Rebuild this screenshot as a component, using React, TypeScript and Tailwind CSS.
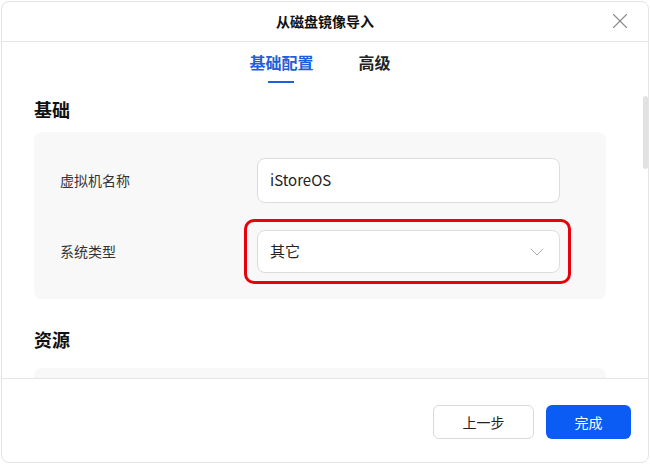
import { X, ChevronDown } from "lucide-react";

const font = { fontFamily: '"Noto Sans CJK SC", "Noto Sans", sans-serif' };

export default function App() {
  return (
    <div style={font} className="h-[464px] w-[650px] bg-white p-px">
      <div className="relative flex h-full w-full flex-col overflow-hidden rounded-[8px] border border-[#e4e4e4] bg-white">
        {/* header */}
        <div className="relative flex h-[40px] shrink-0 items-center justify-center border-b border-[#e6e6e6]">
          <span className="text-[14px] font-bold text-[#111]">从磁盘镜像导入</span>
          <button type="button" className="absolute right-[15px] top-[6px] text-[#8a8a8a]">
            <X size={26} strokeWidth={1} />
          </button>
        </div>

        {/* tabs */}
        <div className="flex h-[48px] shrink-0 justify-center gap-[45px] pr-[10px] pt-[9px]">
          <div className="flex flex-col items-center">
            <span className="text-[16px] font-bold leading-[22px] text-[#1f5fdc]">基础配置</span>
            <span className="mt-[8px] h-[2px] w-[26px] bg-[#1f5fdc]" />
          </div>
          <span className="text-[16px] font-semibold leading-[22px] text-[#222]">高级</span>
        </div>

        {/* body */}
        <div className="relative flex-1 overflow-hidden pl-[32px] pr-[42px] pt-[7px]">
          <h2 className="text-[18px] font-bold leading-[24px] text-[#111]">基础</h2>
          <div className="mt-[11px] flex flex-col gap-[27px] rounded-[8px] bg-[#f8f8f8] py-[26px] pl-[26px] pr-[46px]">
            <div className="flex items-center">
              <span className="w-[197px] text-[14px] text-[#333]">虚拟机名称</span>
              <div className="flex h-[45px] flex-1 items-center rounded-[8px] border border-[#dcdcdc] bg-white px-[12px] text-[15px] text-[#222]">
                iStoreOS
              </div>
            </div>
            <div className="flex items-center">
              <span className="w-[197px] text-[14px] text-[#333]">系统类型</span>
              <div className="relative flex h-[43px] flex-1 items-center justify-between rounded-[8px] border border-[#dcdcdc] bg-white pl-[12px] pr-[10px] text-[15px] text-[#222]">
                <span>其它</span>
                <ChevronDown size={24} strokeWidth={1} className="text-[#aaa]" />
                <div className="pointer-events-none absolute -bottom-[12px] -left-[14px] -right-[12px] -top-[12px] rounded-[10px] border-[3px] border-[#e8000b]" />
              </div>
            </div>
          </div>

          <h2 className="mt-[28px] text-[18px] font-bold leading-[24px] text-[#111]">资源</h2>
          <div className="mt-[17px] h-[80px] rounded-[8px] bg-[#f8f8f8]" />

          <div className="absolute right-0 top-[6px] h-[73px] w-[5px] rounded-full bg-[#e2e2e2]" />
        </div>

        {/* footer */}
        <div className="flex h-[84px] shrink-0 items-start justify-end gap-[12px] border-t border-[#e6e6e6] pr-[17px] pt-[26px]">
          <button
            type="button"
            className="h-[34px] w-[101px] rounded-[6px] border border-[#d9d9d9] bg-white text-[14px] text-[#222]"
          >
            上一步
          </button>
          <button type="button" className="h-[34px] w-[85px] rounded-[6px] bg-[#0a5cf5] text-[14px] text-white">
            完成
          </button>
        </div>
      </div>
    </div>
  );
}
